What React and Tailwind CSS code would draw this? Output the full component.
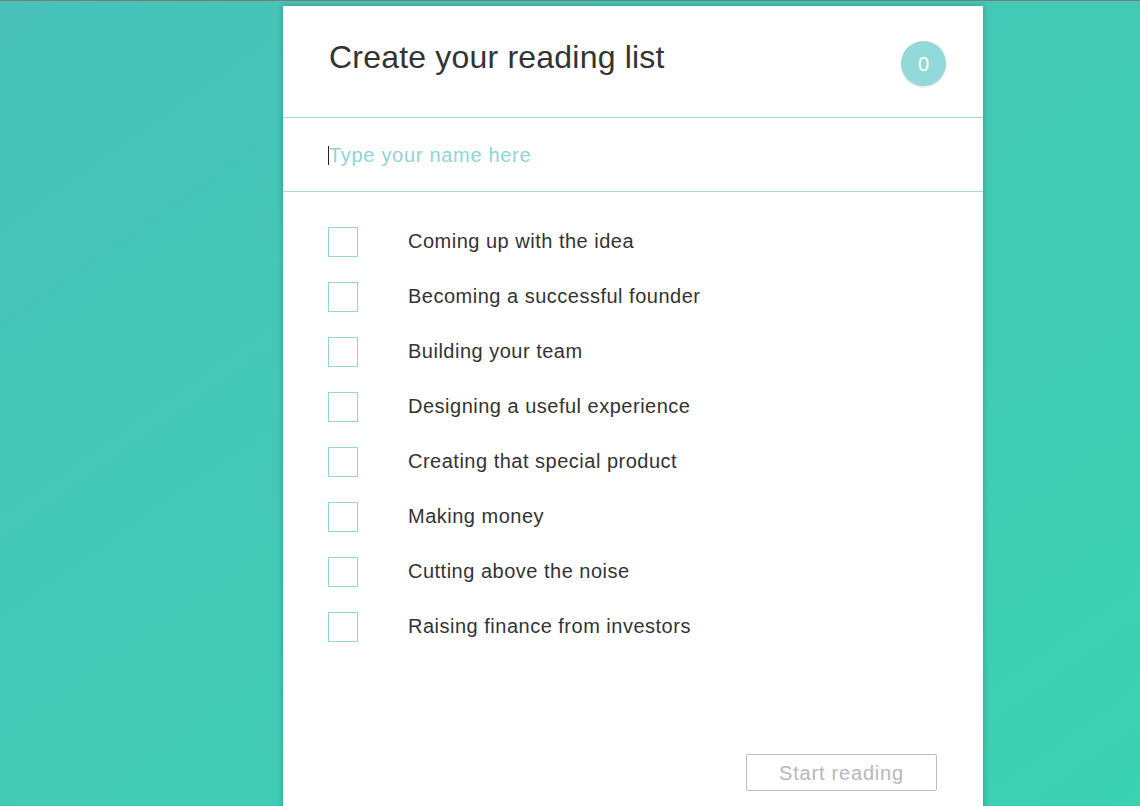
import { useState } from 'react';

const topics = [
  'Coming up with the idea',
  'Becoming a successful founder',
  'Building your team',
  'Designing a useful experience',
  'Creating that special product',
  'Making money',
  'Cutting above the noise',
  'Raising finance from investors',
];

export default function App() {
  const [name, setName] = useState('');
  const [picked, setPicked] = useState([]);

  function toggle(i) {
    setPicked((p) => (p.includes(i) ? p.filter((x) => x !== i) : [...p, i]));
  }

  return (
    <div
      className="h-[806px] overflow-hidden border-t border-[#7a7a7a] bg-gradient-to-br from-[#48c2b9] to-[#3bd2b0]"
      style={{ fontFamily: '"Liberation Sans", Arial, sans-serif' }}
    >
      <div className="w-[700px] ml-[283px] mt-[5px] bg-white shadow-[0_0_6px_rgba(0,0,0,0.25)] min-h-[820px]">
        <header className="h-[112px] flex items-start justify-between pl-[46px] pr-[37px] border-b border-[#a3dbd7]">
          <h1 className="mt-[31px] text-[32px] leading-[40px] text-[#333] tracking-[0.2px]">Create your reading list</h1>
          <div className="mt-[35px] w-[45px] h-[45px] rounded-full bg-[#93d9d9] shadow-[0_1px_2px_rgba(0,0,0,0.15)] flex items-center justify-center text-white text-[20px]">
            {picked.length}
          </div>
        </header>

        <div className="h-[74px] flex items-center pl-[45px] border-b border-[#a3dbd7]">
          <span className="w-px h-[19px] bg-[#222] mt-[1px]" />
          <input
            value={name}
            onChange={(e) => setName(e.target.value)}
            placeholder="Type your name here"
            className="flex-1 outline-none text-[20px] tracking-[0.7px] text-[#444] placeholder:text-[#8dd6d6] bg-transparent"
          />
        </div>

        <ul className="pt-[35px] pl-[45px]">
          {topics.map((t, i) => (
            <li key={t} className="h-[55px] flex items-start">
              <button
                onClick={() => toggle(i)}
                className={`w-[30px] h-[30px] border border-[#8fd8d6] ${picked.includes(i) ? 'bg-[#93d9d9]' : 'bg-white'}`}
              />
              <span className="ml-[50px] text-[20px] leading-[29px] tracking-[0.5px] text-[#333]">{t}</span>
            </li>
          ))}
        </ul>

        <div className="flex justify-end pr-[46px] mt-[87px]">
          <button className="w-[191px] h-[37px] border border-[#bdbdbd] rounded-[2px] text-[20px] tracking-[0.8px] text-[#b8b8b8]">
            Start reading
          </button>
        </div>
      </div>
    </div>
  );
}
